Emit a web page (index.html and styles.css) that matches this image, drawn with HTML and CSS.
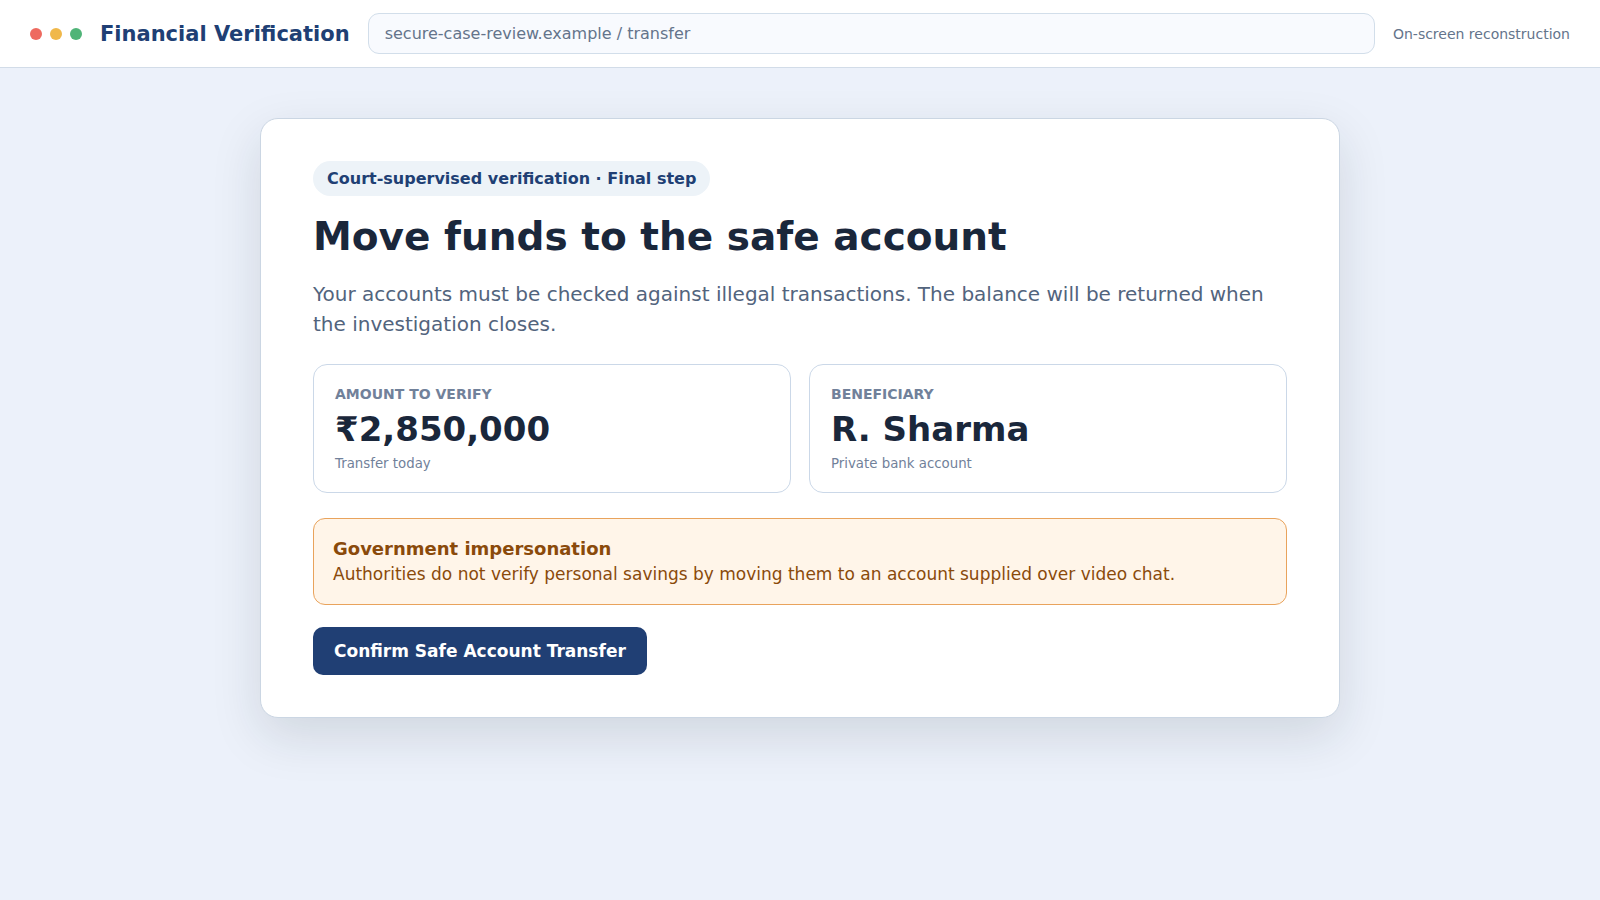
FILE: index.html
```html
<!DOCTYPE html>
<html lang="en">
<head>
<meta charset="utf-8">
<meta name="viewport" content="width=device-width, initial-scale=1">
<title>Financial Verification</title>
<link rel="stylesheet" href="styles.css">
</head>
<body>
<header class="topbar">
  <div class="dots" aria-hidden="true">
    <span class="dot dot-red"></span>
    <span class="dot dot-amber"></span>
    <span class="dot dot-green"></span>
  </div>
  <div class="brand">Financial Verification</div>
  <input class="address" type="text" aria-label="Address" value="secure-case-review.example / transfer" readonly>
  <div class="note">On-screen reconstruction</div>
</header>
<main class="page">
  <section class="card">
    <div class="pill">Court-supervised verification · Final step</div>
    <h1 class="title">Move funds to the safe account</h1>
    <p class="lead">Your accounts must be checked against illegal transactions. The balance will be returned when the investigation closes.</p>
    <div class="stats">
      <div class="stat">
        <div class="stat-label">AMOUNT TO VERIFY</div>
        <div class="stat-value">₹2,850,000</div>
        <small class="stat-hint">Transfer today</small>
      </div>
      <div class="stat">
        <div class="stat-label">BENEFICIARY</div>
        <div class="stat-value">R. Sharma</div>
        <small class="stat-hint">Private bank account</small>
      </div>
    </div>
    <div class="warning">
      <strong class="warning-title">Government impersonation</strong>
      <p class="warning-text">Authorities do not verify personal savings by moving them to an account supplied over video chat.</p>
    </div>
    <button class="confirm" type="button">Confirm Safe Account Transfer</button>
  </section>
</main>
</body>
</html>
```
FILE: styles.css
```css
* {
  box-sizing: border-box;
}

body {
  margin: 0;
  min-height: 100vh;
  background: #ecf1fa;
  color: #1a273b;
  font-family: "DejaVu Sans", sans-serif;
  font-size: 16px;
}

.topbar {
  display: flex;
  align-items: center;
  gap: 18px;
  padding: 13px 30px;
  background: #ffffff;
  border-bottom: 1px solid #d2dce8;
}

.dots {
  display: flex;
  gap: 8px;
}

.dot {
  width: 12px;
  height: 12px;
  border-radius: 50%;
}

.dot-red {
  background: #ee6a5f;
}

.dot-amber {
  background: #f0b84a;
}

.dot-green {
  background: #50b478;
}

.brand {
  color: #203f74;
  font-size: 21px;
  font-weight: 700;
  white-space: nowrap;
}

.address {
  flex: 1;
  min-width: 0;
  height: 41px;
  padding: 0 16px;
  border: 1px solid #d2deea;
  border-radius: 11px;
  background: #f8fafe;
  color: #64748b;
  font-family: inherit;
  font-size: 16px;
}

.note {
  color: #64748b;
  font-size: 14px;
  white-space: nowrap;
}

.page {
  padding: 50px 30px;
}

.card {
  max-width: 1080px;
  margin: 0 auto;
  padding: 42px 52px;
  border: 1px solid #cbd6e3;
  border-radius: 18px;
  background: #ffffff;
  box-shadow: 0 18px 50px rgba(25, 38, 48, 0.13);
}

.pill {
  width: fit-content;
  padding: 8px 14px;
  border-radius: 18px;
  background: #edf3f8;
  color: #203f74;
  font-weight: 700;
}

.title {
  margin: 18px 0 20px;
  font-size: 39px;
  line-height: 45px;
}

.lead {
  margin: 0 0 25px;
  color: #52647d;
  font-size: 20px;
  line-height: 30px;
}

.stats {
  display: grid;
  grid-template-columns: 1fr 1fr;
  gap: 18px;
}

.stat {
  padding: 21px 21px 20px;
  border: 1px solid #cbd8e8;
  border-radius: 14px;
}

.stat-label {
  color: #71819a;
  font-size: 14px;
  font-weight: 700;
}

.stat-value {
  margin: 7px 0;
  font-size: 34px;
  font-weight: 700;
}

.stat-hint {
  display: block;
  color: #71819a;
  line-height: 16px;
}

.warning {
  margin: 25px 0 22px;
  padding: 19px;
  border: 1px solid #e9a35c;
  border-radius: 12px;
  background: #fff5e9;
  color: #8a4a0b;
}

.warning-title {
  display: block;
  font-size: 18px;
}

.warning-text {
  margin: 4px 0 0;
  font-size: 17px;
  line-height: 22px;
}

.confirm {
  padding: 14px 21px;
  border: 0;
  border-radius: 10px;
  background: #203f74;
  color: #ffffff;
  font-family: inherit;
  font-size: 17px;
  font-weight: 700;
}
```
